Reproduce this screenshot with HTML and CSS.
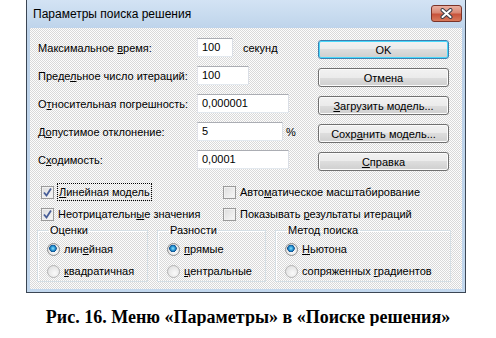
FILE: index.html
```html
<!DOCTYPE html>
<html lang="ru">
<head>
  <meta charset="UTF-8">
  <title>Параметры поиска решения</title>
  <link rel="stylesheet" href="styles.css">
</head>
<body>
  <div class="window">
    <div class="titlebar">
      <span class="title">Параметры поиска решения</span>
      <span class="close">
        <svg width="13" height="11" viewBox="0 0 13 11">
          <path d="M2.5 2 L10.5 9 M10.5 2 L2.5 9" stroke="#3b3f4a" stroke-width="4" stroke-linecap="round"/>
          <path d="M2.5 2 L10.5 9 M10.5 2 L2.5 9" stroke="#fff" stroke-width="2" stroke-linecap="round"/>
        </svg>
      </span>
    </div>
    <div class="client">
      <div class="top">
        <div class="fields">
          <div class="row">
            <span class="label">Максимальное <u>в</u>ремя:</span>
            <span class="input w-time">100</span>
            <span class="unit">секунд</span>
          </div>
          <div class="row">
            <span class="label">Преде<u>л</u>ьное число итераций:</span>
            <span class="input w-iter">100</span>
          </div>
          <div class="row">
            <span class="label">О<u>т</u>носительная погрешность:</span>
            <span class="input w-long">0,000001</span>
          </div>
          <div class="row">
            <span class="label">Д<u>о</u>пустимое отклонение:</span>
            <span class="input w-dev">5</span>
            <span class="unit percent">%</span>
          </div>
          <div class="row">
            <span class="label">С<u>х</u>одимость:</span>
            <span class="input w-long">0,0001</span>
          </div>
        </div>
        <div class="buttons">
          <button class="btn default">OK</button>
          <button class="btn">Отмена</button>
          <button class="btn"><u>З</u>агрузить модель...</button>
          <button class="btn">Сохр<u>а</u>нить модель...</button>
          <button class="btn"><u>С</u>правка</button>
        </div>
      </div>

      <div class="checks">
        <div class="check"><span class="box on"></span><span class="focus"><u>Л</u>инейная модель</span></div>
        <div class="check"><span class="box"></span><span class="text">Авто<u>м</u>атическое масштабирование</span></div>
        <div class="check"><span class="box on"></span><span class="text">Неотрицательн<u>ы</u>е значения</span></div>
        <div class="check"><span class="box"></span><span class="text">Показывать <u>р</u>езультаты итераций</span></div>
      </div>

      <div class="groups">
        <fieldset class="group g-est">
          <legend>Оценки</legend>
          <div class="radio"><span class="dot on"></span><span>лин<u>е</u>йная</span></div>
          <div class="radio"><span class="dot"></span><span><u>к</u>вадратичная</span></div>
        </fieldset>
        <fieldset class="group g-diff">
          <legend>Разности</legend>
          <div class="radio"><span class="dot on"></span><span><u>п</u>рямые</span></div>
          <div class="radio"><span class="dot"></span><span><u>ц</u>ентральные</span></div>
        </fieldset>
        <fieldset class="group g-method">
          <legend>Метод поиска</legend>
          <div class="radio"><span class="dot on"></span><span><u>Н</u>ьютона</span></div>
          <div class="radio"><span class="dot"></span><span>сопряженных <u>г</u>радиентов</span></div>
        </fieldset>
      </div>
    </div>
  </div>

  <p class="caption">Рис. 16. Меню «Параметры» в «Поиске решения»</p>
</body>
</html>
```

FILE: styles.css
```css
body {
  margin: 0;
  background: #fff;
  color: #000;
  font-family: "Liberation Sans", Arial, sans-serif;
  font-size: 11px;
}

u {
  text-underline-offset: 1px;
}

/* окно */
.window {
  margin-left: 26px;
  width: 440px;
  height: 293px;
  padding: 0 3px 3px;
  box-sizing: border-box;
  border: 1px solid #3b4654;
  border-top: none;
  background: linear-gradient(#d3e3f4, #bdd3ea 30px, #c3d8ee);
  display: flex;
  flex-direction: column;
}

.titlebar {
  height: 28px;
  flex: none;
  display: flex;
  justify-content: space-between;
  align-items: flex-start;
}
.titlebar .title {
  padding-left: 3px;
  line-height: 28px;
  font-size: 12px;
}
.titlebar .close {
  margin-top: 5px;
  width: 31px;
  height: 17px;
  box-sizing: border-box;
  border: 1px solid #7a3328;
  border-radius: 3px;
  background: linear-gradient(#eab1a2, #d98874 45%, #c8533b 55%, #d97a5c);
  display: flex;
  justify-content: center;
  align-items: center;
}

.client {
  flex: 1;
  padding: 10px 0 0 8px;
  white-space: nowrap;
  background-color: #ebebeb;
  background-image: repeating-conic-gradient(#fdfdfd 0 25%, #d9d9d9 0 50%);
  background-size: 2px 2px;
}

.top {
  display: flex;
}

.fields {
  width: 280px;
  display: flex;
  flex-direction: column;
  gap: 9px;
}
.row {
  height: 19px;
  display: flex;
  align-items: center;
}
.row .label {
  width: 159px;
  flex: none;
}
.input {
  height: 19px;
  box-sizing: border-box;
  padding-left: 4px;
  line-height: 17px;
  border: 1px solid #abadb3;
  border-color: #abadb3 #dbdfe6 #e3e9ef #e2e3ea;
  background: #fff;
}
.w-time { width: 36px; }
.w-iter { width: 52px; }
.w-long { width: 92px; }
.w-dev { width: 86px; }
.unit {
  margin-left: 10px;
}
.unit.percent {
  margin-left: 3px;
}

.buttons {
  margin-top: 2px;
  width: 131px;
  display: flex;
  flex-direction: column;
  gap: 9px;
}
.btn {
  height: 19px;
  padding: 0;
  font: inherit;
  color: #000;
  border: 1px solid #707070;
  border-radius: 3px;
  background: linear-gradient(#f2f2f2, #ebebeb 50%, #dddddd 50%, #cfcfcf);
  box-shadow: inset 0 0 0 1px #fbfbfb;
}
.btn.default {
  border-color: #3c7fb1;
  box-shadow: inset 0 0 0 1px #48d8fb;
}

/* флажки */
.checks {
  margin-top: 12px;
  padding-left: 3px;
  display: grid;
  grid-template-columns: 182px 1fr;
  grid-auto-rows: 18px;
  row-gap: 4px;
}
.check {
  display: flex;
  align-items: center;
}
.box {
  width: 13px;
  height: 13px;
  box-sizing: border-box;
  border: 1px solid #9a9a9a;
  background: linear-gradient(135deg, #dcdcdc, #f8f8f8);
  box-shadow: inset 0 0 0 1px #f0f0f0;
  margin-right: 4px;
  flex: none;
}
.box.on {
  background:
    url("data:image/svg+xml,%3Csvg xmlns='http://www.w3.org/2000/svg' width='11' height='11'%3E%3Cpath d='M2 5.5 L4.5 8.5 L9 1.5' fill='none' stroke='%23475d97' stroke-width='1.8'/%3E%3C/svg%3E") center/11px 11px no-repeat,
    linear-gradient(135deg, #dcdcdc, #f8f8f8);
}
.check .focus {
  margin-left: -1px;
  padding: 0 1px;
  line-height: 16px;
  border: 1px dotted #000;
}

/* группы переключателей */
.groups {
  margin: 0 0 0 -1px;
  display: flex;
  gap: 9px;
}
.group {
  margin: 0;
  padding: 3px 0 1px 9px;
  border: 1px solid #d5dfe5;
  box-shadow: inset 1px 1px 0 #fff;
  display: flex;
  flex-direction: column;
  gap: 4px;
  min-width: 0;
  box-sizing: border-box;
}
.group legend {
  margin-left: 1px;
  padding: 0 2px;
  line-height: 14px;
}
.g-est { width: 111px; }
.g-diff { width: 109px; }
.g-method { width: 176px; }

.radio {
  height: 18px;
  display: flex;
  align-items: center;
}
.dot {
  width: 13px;
  height: 13px;
  box-sizing: border-box;
  border-radius: 50%;
  border: 1px solid #b4b4b4;
  background: radial-gradient(circle at 60% 65%, #fafafa, #dadada);
  margin-right: 4px;
  flex: none;
}
.dot.on {
  border-color: #8c8c8c;
  background:
    radial-gradient(circle at 45% 40%, #8ee0fb 0, #2a9ad8 2px, #0d4f8f 3.5px, transparent 4px),
    radial-gradient(circle at 60% 65%, #fafafa, #d6d6d6);
}

.caption {
  margin: 15px 0 0;
  text-align: center;
  font-family: "Liberation Serif", "Times New Roman", serif;
  font-weight: bold;
  font-size: 18px;
  line-height: 18px;
}
```
